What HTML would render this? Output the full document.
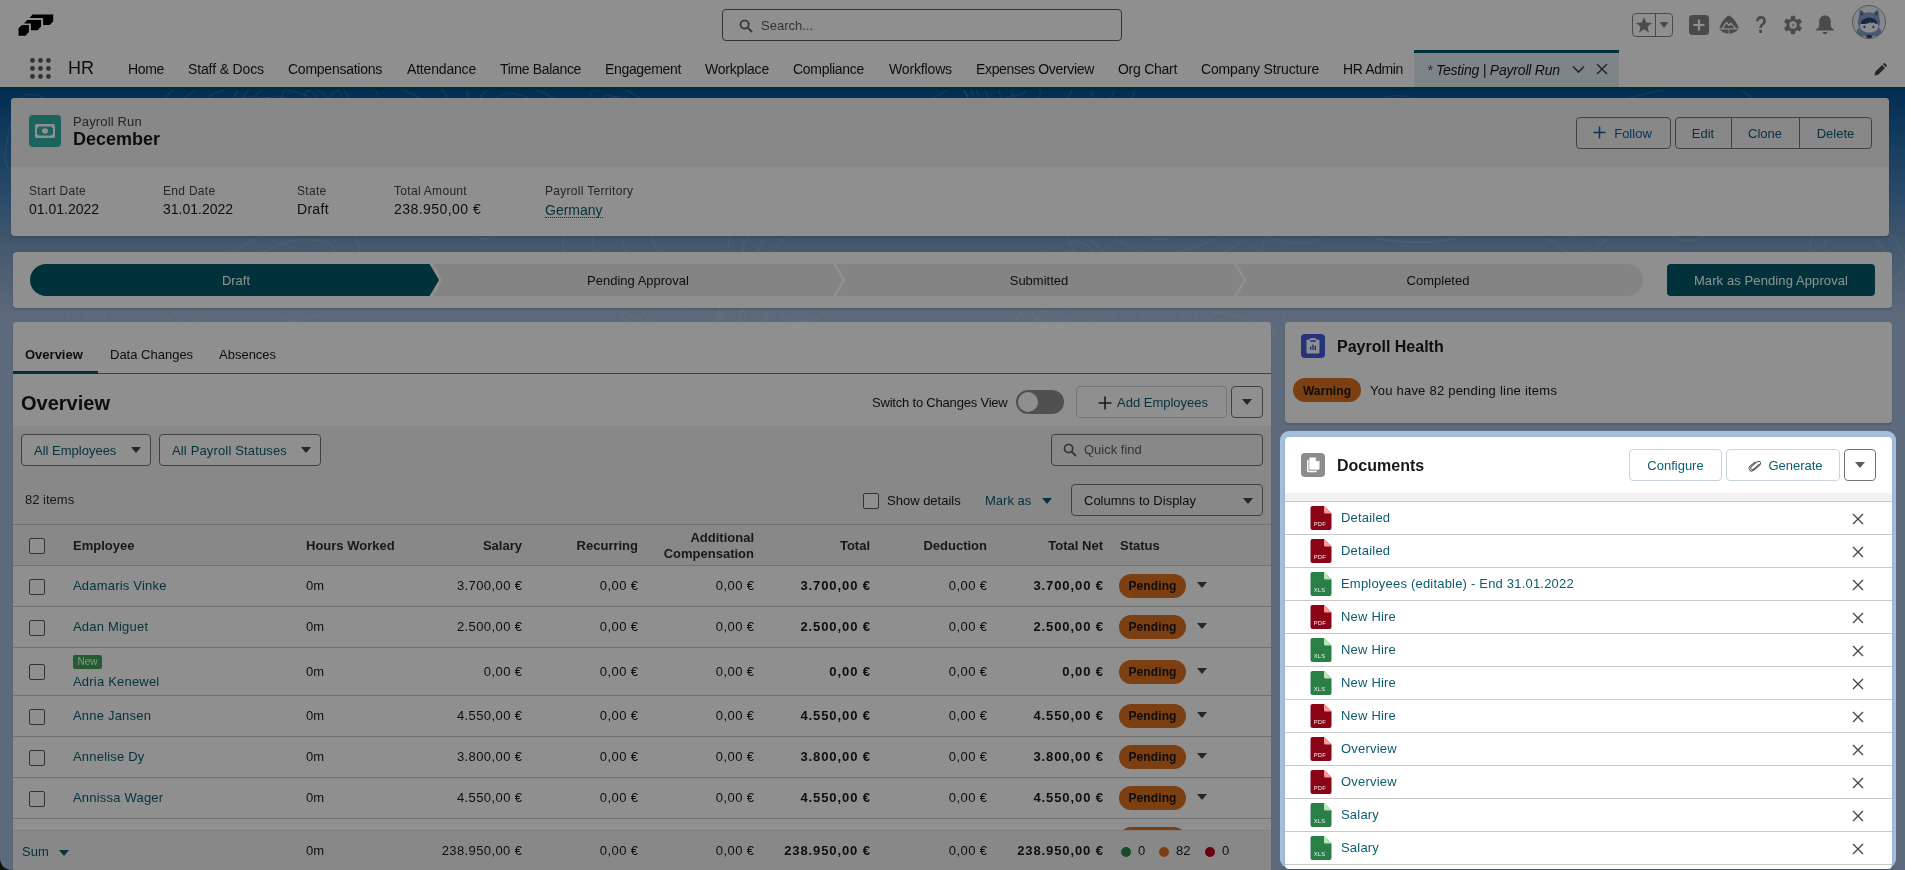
<!DOCTYPE html>
<html lang="en">
<head>
<meta charset="utf-8">
<title>December | Payroll Run</title>
<style>
*{box-sizing:border-box;margin:0;padding:0}
html,body{width:1905px;height:870px;overflow:hidden}
body{font-family:"Liberation Sans",sans-serif;font-size:13px;color:#181818;background:#a5bedc;position:relative}
.abs{position:absolute}
.t{white-space:nowrap;color:#181818}
a{color:#0b5c6f;text-decoration:none}
svg{display:block}
/* ---------- header ---------- */
#hdr{position:absolute;left:0;top:0;width:1905px;height:90px;background:#fff;border-bottom:3px solid #015366}
#search{position:absolute;left:722px;top:9px;width:400px;height:32px;border:1px solid #5c5c5c;border-radius:4px;background:#fff}
#search span{position:absolute;left:38px;top:8px;font-size:13px;color:#5c5c5c}
.nav{position:absolute;top:61px;font-size:14px;line-height:16px;color:#181818;white-space:nowrap}
#tab{position:absolute;left:1414px;top:50px;width:205px;height:37px;background:#e3eef0;border-top:3px solid #015366}
/* ---------- background band ---------- */
#band{position:absolute;left:0;top:90px;width:1905px;height:250px;background:linear-gradient(to bottom,rgb(5,80,146) 0,rgb(36,107,170) 20%,rgb(80,134,188) 44%,rgb(120,157,196) 61.600%,rgb(166,188,218) 90%,rgb(165,190,220) 100%)}
/* ---------- cards ---------- */
.card{position:absolute;background:#fff;border-radius:4px;box-shadow:0 2px 2px rgba(0,0,0,.12)}
.lbl{position:absolute;font-size:12px;color:#444;white-space:nowrap;letter-spacing:.3px}
.val{position:absolute;font-size:14px;color:#181818;white-space:nowrap}
.btn{position:absolute;height:32px;border:1px solid #747474;background:#fff;border-radius:4px;font-size:13px;color:#0b5c6f;text-align:center;line-height:30px;white-space:nowrap}
#hdr,.card,#docs{will-change:transform}
/* ---------- overlay ---------- */
#dim{position:absolute;left:0;top:0;width:1905px;height:870px;background:rgba(0,0,0,.44);z-index:50}
#hl{position:absolute;left:1280px;top:431px;width:616px;height:437px;background:#a5bedc;border-radius:9px;z-index:60}
#docs{position:absolute;left:1285px;top:437px;width:607px;height:432px;background:#fff;border-radius:4px;z-index:70;overflow:hidden;box-shadow:0 1px 2px rgba(0,0,0,.22)}
</style>
</head>
<body>
<!--BG-->
<div id="band"><svg class="abs" style="left:0;top:0" width="1905" height="250" viewBox="0 0 1905 250"><g fill="none" stroke="#fff" stroke-opacity=".13" stroke-width="1.200"><path d="M648 41C646 46 634 51 627 52C620 53 614 48 607 46C599 43 586 42 584 38C583 34 592 27 596 21C600 16 601 7 606 5C612 4 622 10 627 13C633 16 636 18 640 23C643 28 651 36 648 41z"/><path d="M666 48C662 55 643 63 632 64C622 65 612 58 601 55C590 51 569 49 566 43C564 36 579 25 585 17C590 9 592 -5 600 -8C609 -10 624 -1 633 4C642 8 647 12 653 20C658 27 669 40 666 48z"/><path d="M812 221C808 222 798 223 794 221C790 219 789 212 789 208C789 204 792 201 794 197C797 193 801 186 804 186C808 186 812 194 816 197C821 199 831 199 832 202C833 204 825 209 822 212C819 215 817 219 812 221z"/><path d="M814 229C807 232 792 233 786 229C780 226 778 215 778 209C778 203 782 198 786 193C790 187 796 175 802 175C808 175 813 188 820 192C828 196 844 196 845 200C847 204 835 211 829 216C824 221 821 227 814 229z"/><path d="M282 7C288 8 296 10 299 13C302 17 302 25 299 29C297 33 289 35 283 37C277 38 269 40 265 38C261 37 260 29 259 25C258 22 258 19 259 15C261 12 264 8 268 7C272 5 277 6 282 7z"/><path d="M287 -0C295 2 308 4 312 9C316 15 317 27 313 33C309 39 296 43 287 45C278 48 265 51 259 48C253 45 252 34 250 28C249 22 249 17 251 13C253 8 258 1 264 -1C270 -3 279 -2 287 -0z"/><path d="M291 -7C302 -5 319 -2 325 5C331 13 332 30 326 38C321 46 304 51 292 54C280 57 262 62 254 58C245 54 244 39 242 31C240 23 239 16 242 10C245 3 252 -6 260 -9C268 -11 280 -10 291 -7z"/><path d="M295 -15C309 -12 331 -8 339 1C346 11 347 32 340 43C333 53 312 59 296 63C281 67 259 73 248 68C237 63 235 43 233 33C231 23 230 15 234 7C238 -1 246 -13 256 -16C266 -20 281 -18 295 -15z"/><path d="M1276 92C1280 88 1285 87 1291 85C1297 84 1306 80 1311 82C1317 83 1323 91 1323 96C1324 100 1317 105 1314 109C1310 113 1308 119 1303 120C1298 122 1289 120 1283 118C1277 115 1267 111 1266 107C1265 103 1272 95 1276 92z"/><path d="M1264 87C1271 81 1279 79 1288 77C1297 74 1311 68 1320 71C1328 73 1338 86 1338 93C1339 100 1328 107 1323 113C1318 120 1314 129 1306 131C1298 133 1286 130 1276 127C1267 123 1252 117 1250 110C1248 104 1258 92 1264 87z"/><path d="M1253 82C1262 74 1273 72 1285 68C1298 64 1317 56 1328 60C1339 64 1352 80 1353 90C1354 100 1340 109 1333 118C1325 126 1320 139 1310 142C1299 145 1282 141 1269 136C1257 131 1236 123 1233 114C1230 105 1245 89 1253 82z"/><path d="M1242 76C1253 67 1267 64 1282 59C1298 55 1322 45 1336 49C1351 54 1367 75 1368 87C1369 99 1351 111 1342 122C1333 133 1326 148 1313 152C1300 156 1278 151 1262 145C1246 139 1220 128 1216 117C1213 105 1231 86 1242 76z"/><path d="M1420 86C1413 93 1401 105 1392 104C1383 104 1375 90 1367 84C1360 77 1346 72 1346 66C1346 61 1361 56 1368 50C1375 43 1378 30 1387 27C1397 25 1417 30 1425 36C1433 42 1436 55 1435 63C1435 72 1427 79 1420 86z"/><path d="M1437 98C1425 109 1407 127 1393 126C1380 126 1367 104 1355 94C1343 84 1322 76 1323 67C1323 58 1345 51 1356 41C1366 31 1372 10 1386 7C1401 3 1431 10 1444 19C1456 29 1462 49 1461 62C1459 76 1448 87 1437 98z"/><path d="M1637 56C1642 50 1652 48 1661 46C1670 44 1684 40 1692 44C1701 47 1713 57 1713 65C1714 72 1703 80 1697 87C1690 93 1683 101 1675 101C1668 102 1662 91 1654 87C1646 83 1631 83 1628 78C1625 72 1631 61 1637 56z"/><path d="M1620 47C1628 38 1643 34 1657 31C1672 28 1692 23 1706 28C1719 33 1737 50 1739 61C1740 72 1722 85 1713 95C1703 104 1691 118 1680 118C1669 118 1659 102 1647 96C1634 90 1611 89 1606 81C1602 73 1611 55 1620 47z"/><path d="M1602 38C1614 27 1634 21 1654 17C1673 13 1701 6 1719 13C1737 19 1762 42 1764 57C1765 72 1742 90 1729 103C1715 116 1699 134 1684 134C1669 135 1656 113 1639 105C1622 96 1590 95 1584 84C1578 73 1591 49 1602 38z"/><path d="M1585 29C1600 15 1626 8 1650 3C1675 -3 1710 -11 1733 -3C1756 6 1787 34 1789 53C1791 72 1761 95 1744 111C1728 127 1707 150 1688 151C1669 151 1652 124 1631 113C1611 103 1570 102 1563 88C1555 73 1571 43 1585 29z"/><path d="M1225 275C1215 273 1199 272 1196 266C1193 261 1205 251 1207 244C1210 237 1207 227 1212 224C1218 220 1232 224 1239 226C1247 228 1254 232 1257 236C1260 241 1259 246 1259 253C1259 260 1263 275 1258 278C1252 282 1235 277 1225 275z"/><path d="M1221 290C1205 287 1180 284 1176 276C1171 268 1189 253 1193 242C1198 230 1193 215 1201 210C1209 205 1231 210 1243 213C1254 217 1265 223 1270 230C1275 237 1273 244 1274 255C1274 266 1280 289 1272 295C1263 301 1237 293 1221 290z"/><path d="M1217 305C1195 301 1162 297 1155 286C1149 275 1174 254 1179 239C1185 224 1179 203 1190 196C1201 190 1231 196 1246 201C1262 205 1276 214 1283 223C1290 233 1288 243 1288 258C1289 272 1297 304 1285 311C1273 319 1238 309 1217 305z"/><path d="M259 44C264 47 271 50 272 54C273 58 271 65 266 69C262 74 254 80 247 81C240 81 230 77 224 73C218 68 212 60 213 55C214 50 225 46 230 42C235 39 241 35 246 35C251 35 255 41 259 44z"/><path d="M267 38C273 43 285 47 286 54C288 60 284 70 278 77C271 84 259 94 248 95C237 96 220 89 211 83C202 76 193 63 194 55C196 48 212 41 221 36C229 31 238 24 245 24C253 25 260 33 267 38z"/><path d="M274 32C283 39 298 44 301 53C303 62 297 76 289 85C280 95 263 108 248 109C233 110 211 102 199 93C187 84 174 66 176 56C178 45 200 36 212 29C223 22 235 13 245 14C255 14 265 26 274 32z"/><path d="M703 241C695 244 686 247 678 246C670 246 661 241 655 236C649 230 641 222 641 215C642 207 649 195 657 191C665 188 681 190 689 193C697 195 701 202 706 207C712 213 724 219 723 225C723 230 710 237 703 241z"/><path d="M714 252C702 258 687 262 675 261C662 260 649 252 639 244C630 236 618 223 618 212C619 200 630 181 642 176C654 170 680 174 692 178C705 182 710 192 719 200C728 209 746 219 745 228C745 236 725 247 714 252z"/><path d="M688 106C699 103 712 102 722 105C732 107 747 117 748 124C750 131 735 137 730 146C726 155 731 172 724 176C716 181 695 177 683 173C671 169 658 161 653 153C649 144 650 129 656 121C662 114 677 109 688 106z"/><path d="M679 89C696 85 716 82 732 87C748 91 771 105 773 116C775 127 752 138 745 151C739 165 747 191 735 198C722 205 690 200 672 193C654 187 632 174 625 161C618 147 621 125 630 113C639 101 662 94 679 89z"/><path d="M670 72C693 66 721 62 742 69C763 75 794 94 797 109C800 123 769 138 760 156C752 175 762 210 746 220C729 229 685 222 661 213C636 205 607 188 598 169C588 151 592 120 604 104C616 88 647 78 670 72z"/><path d="M661 55C690 48 726 43 752 51C779 58 818 83 822 101C826 120 786 138 775 161C764 185 778 229 757 241C736 253 680 244 649 233C618 223 582 201 570 178C558 155 562 116 578 95C593 75 632 63 661 55z"/><path d="M739 86C741 85 745 84 748 84C751 84 756 84 759 86C761 88 762 92 762 94C762 97 761 102 758 103C756 105 750 104 747 104C743 103 741 102 738 100C736 98 733 95 733 93C734 91 736 88 739 86z"/><path d="M734 82C738 80 744 78 749 78C754 78 761 79 765 82C768 85 769 90 769 95C769 99 768 106 765 108C761 111 752 110 746 109C741 108 737 106 734 103C730 101 726 96 726 93C726 89 730 85 734 82z"/><path d="M729 78C735 75 742 73 749 73C756 73 766 74 771 78C775 82 777 89 777 95C777 101 776 110 771 114C765 117 753 115 746 114C739 113 733 110 729 107C724 103 718 97 718 92C718 88 724 81 729 78z"/><path d="M725 74C731 70 741 67 749 67C758 67 771 69 777 74C783 78 785 88 785 95C785 103 783 115 777 119C770 123 754 121 746 120C737 118 730 115 724 110C718 106 710 98 710 92C711 86 718 78 725 74z"/><path d="M206 75C208 78 206 82 206 84C205 87 205 90 203 92C201 94 197 96 193 96C190 96 185 94 183 93C181 91 182 88 181 85C181 81 177 76 179 74C181 71 189 67 193 68C198 68 204 72 206 75z"/><path d="M212 70C216 74 213 80 212 84C212 89 211 93 208 96C205 99 199 102 193 102C188 102 180 100 177 97C174 94 176 90 175 85C174 80 168 72 171 68C174 63 186 58 193 58C200 59 209 65 212 70z"/><path d="M901 123C899 125 894 126 890 127C886 128 877 131 874 129C872 128 873 121 874 117C875 114 876 114 878 110C880 107 881 99 884 98C888 97 896 102 899 104C902 107 901 111 901 114C901 117 902 121 901 123z"/><path d="M908 127C905 131 898 132 891 134C884 135 871 140 867 137C863 134 866 123 867 118C868 113 870 112 873 107C875 102 877 89 882 88C888 86 900 94 905 98C909 102 908 109 909 113C909 118 911 124 908 127z"/><path d="M1073 -7C1074 -1 1068 9 1063 13C1057 17 1046 16 1038 17C1031 17 1022 17 1018 14C1013 11 1013 5 1011 -0C1009 -6 1002 -16 1006 -20C1009 -24 1022 -26 1030 -27C1039 -28 1050 -29 1057 -25C1064 -22 1072 -14 1073 -7z"/><path d="M1094 -9C1095 1 1087 16 1078 22C1069 28 1052 27 1040 27C1029 27 1016 28 1009 24C1002 19 1002 10 999 1C995 -8 985 -22 990 -29C994 -36 1015 -39 1028 -40C1041 -41 1058 -43 1069 -38C1080 -33 1092 -19 1094 -9z"/><path d="M1115 -12C1117 2 1105 23 1093 31C1081 39 1058 38 1042 38C1027 38 1009 39 999 33C990 27 990 14 986 2C981 -10 967 -29 974 -39C980 -48 1008 -51 1026 -53C1044 -55 1066 -57 1081 -50C1096 -43 1113 -25 1115 -12z"/><path d="M1136 -14C1138 3 1124 30 1109 40C1093 50 1064 48 1044 49C1024 49 1002 50 990 42C978 35 978 19 973 4C967 -11 949 -36 957 -48C966 -60 1001 -64 1023 -66C1046 -69 1075 -71 1093 -63C1112 -54 1133 -31 1136 -14z"/><path d="M676 44C679 51 672 64 664 71C657 78 644 84 633 84C622 85 605 81 599 75C593 69 597 58 597 50C597 43 593 34 598 29C602 24 617 21 625 21C632 22 636 29 645 33C653 36 673 38 676 44z"/><path d="M703 42C708 52 696 73 684 84C673 94 652 103 635 104C618 105 593 99 583 90C574 81 580 64 580 52C579 40 574 26 581 18C588 11 611 6 623 7C635 8 640 18 654 24C667 30 698 32 703 42z"/><path d="M42 41C47 39 56 45 62 47C69 49 78 50 81 54C84 59 84 67 81 72C79 77 70 84 64 84C58 85 49 80 45 77C40 74 37 71 36 68C35 64 35 61 36 57C37 52 38 42 42 41z"/><path d="M36 29C43 26 57 35 67 39C77 42 92 43 97 50C102 56 101 70 97 78C92 85 79 95 70 96C60 98 47 90 40 85C33 81 29 76 26 70C24 65 25 61 27 54C29 47 30 31 36 29z"/><path d="M31 17C40 13 59 25 72 30C86 35 106 37 112 45C119 54 118 73 112 83C106 94 89 107 76 108C63 110 45 99 35 93C25 87 20 80 17 73C14 66 15 60 18 50C20 41 21 20 31 17z"/><path d="M25 5C36 1 60 15 77 21C94 27 119 30 128 41C136 52 136 75 128 88C120 102 98 118 82 120C66 123 43 109 31 101C18 94 11 85 7 76C4 67 5 59 8 47C11 35 13 9 25 5z"/><path d="M408 24C413 30 409 40 407 47C405 54 403 62 397 66C390 71 375 76 368 74C362 72 361 60 356 54C350 48 339 45 338 39C337 32 342 21 349 16C357 12 371 11 381 13C391 14 404 19 408 24z"/><path d="M427 14C433 23 428 38 425 49C422 60 419 72 409 79C398 86 376 94 365 91C354 88 353 69 345 60C337 51 319 46 318 36C316 27 324 8 335 2C347 -5 369 -6 384 -4C400 -2 420 5 427 14z"/><path d="M445 4C454 16 447 37 443 51C439 66 434 82 420 91C407 101 376 112 362 108C347 103 345 78 334 66C324 53 300 47 298 34C295 21 306 -4 322 -13C337 -22 367 -24 388 -21C408 -18 436 -8 445 4z"/><path d="M463 -7C475 9 466 35 461 54C456 72 450 92 432 104C415 116 376 130 358 125C340 119 337 87 324 72C310 56 280 48 277 31C275 15 289 -16 308 -28C327 -39 365 -41 391 -38C417 -34 452 -22 463 -7z"/><path d="M1433 101C1438 101 1447 101 1450 104C1454 107 1458 116 1456 119C1454 123 1444 125 1439 127C1434 128 1430 129 1424 129C1419 128 1409 128 1406 125C1403 122 1403 113 1406 110C1408 106 1416 105 1421 104C1425 102 1428 101 1433 101z"/><path d="M1436 93C1444 93 1457 94 1462 99C1468 104 1473 116 1470 122C1467 128 1452 131 1444 134C1436 136 1430 137 1422 137C1413 136 1398 136 1393 131C1388 126 1389 113 1393 107C1397 102 1409 100 1416 98C1423 96 1428 93 1436 93z"/><path d="M1438 86C1449 86 1466 87 1474 93C1482 100 1489 117 1485 125C1481 133 1461 138 1450 141C1439 144 1431 145 1419 145C1408 144 1387 144 1380 137C1374 130 1375 112 1380 105C1385 98 1402 95 1412 92C1421 89 1428 85 1438 86z"/><path d="M1441 78C1454 78 1476 80 1486 88C1496 96 1505 118 1500 128C1495 138 1469 144 1455 148C1441 152 1431 153 1417 152C1402 152 1376 151 1367 143C1359 135 1361 112 1367 103C1374 93 1395 91 1407 86C1419 82 1428 78 1441 78z"/><path d="M253 7C262 7 281 7 288 13C295 19 299 36 294 44C290 52 272 59 261 61C251 63 239 59 229 56C219 53 206 49 203 43C200 37 209 27 213 21C218 16 224 13 231 10C237 8 243 6 253 7z"/><path d="M259 -6C274 -5 303 -6 314 4C324 13 330 40 323 52C316 65 289 76 272 79C255 82 237 76 222 71C207 66 186 60 182 51C178 42 190 25 197 17C204 8 214 3 224 -0C234 -4 244 -6 259 -6z"/><path d="M265 -18C285 -17 325 -18 339 -5C354 8 361 43 351 60C342 77 305 93 283 97C260 101 235 92 215 86C195 79 166 71 160 58C155 46 172 24 181 12C191 1 204 -6 218 -11C232 -16 244 -19 265 -18z"/><path d="M271 -30C296 -29 346 -31 365 -14C383 2 392 47 380 68C368 90 322 109 293 114C265 120 234 108 208 100C182 92 146 81 139 66C132 51 153 22 165 8C178 -7 194 -15 212 -21C229 -28 245 -32 271 -30z"/><path d="M1876 150C1880 155 1888 164 1886 170C1884 175 1872 184 1865 185C1857 187 1847 180 1841 176C1834 173 1829 171 1826 167C1824 163 1823 156 1825 152C1827 147 1833 144 1839 141C1845 139 1855 134 1861 136C1867 137 1872 144 1876 150z"/><path d="M1891 145C1897 153 1908 166 1905 175C1903 185 1885 198 1873 200C1862 202 1846 191 1836 186C1826 181 1818 178 1814 171C1810 165 1808 154 1812 148C1815 141 1824 136 1834 132C1843 127 1858 121 1868 123C1877 125 1885 136 1891 145z"/><path d="M509 92C511 95 513 99 512 102C512 105 509 110 505 112C501 115 493 119 489 118C484 117 482 110 479 107C476 103 469 98 470 95C471 91 479 88 484 86C488 85 494 83 498 84C503 85 506 89 509 92z"/><path d="M517 88C520 92 523 98 523 104C522 109 517 116 511 120C505 124 493 129 486 128C479 126 475 117 470 111C465 105 455 98 456 93C458 87 471 82 478 79C485 77 494 75 501 76C507 77 513 83 517 88z"/><path d="M525 84C530 90 534 98 533 105C531 113 526 121 517 127C509 132 492 140 483 138C474 136 468 123 462 115C455 107 441 97 443 90C445 83 462 76 472 73C482 69 494 66 503 68C512 70 520 78 525 84z"/><path d="M533 80C539 88 544 98 543 107C541 116 534 127 523 134C513 141 492 151 480 148C468 146 462 129 453 119C445 109 427 97 429 88C432 79 454 70 466 66C479 61 494 57 505 60C516 62 527 72 533 80z"/><path d="M1005 8C998 11 990 20 985 19C981 18 980 7 977 2C975 -4 970 -8 971 -13C973 -18 978 -26 984 -28C990 -30 1002 -29 1008 -26C1014 -24 1017 -18 1020 -13C1023 -8 1026 -1 1024 3C1021 6 1011 5 1005 8z"/><path d="M1009 15C999 19 986 34 978 33C971 31 970 14 967 5C963 -3 956 -9 957 -17C959 -25 967 -37 977 -41C986 -44 1004 -42 1013 -38C1023 -34 1028 -25 1032 -17C1036 -10 1043 2 1039 7C1035 12 1019 11 1009 15z"/><path d="M1044 190C1046 187 1048 185 1052 183C1056 181 1062 177 1066 178C1070 179 1074 185 1075 188C1077 192 1078 196 1076 199C1075 203 1071 208 1067 209C1062 211 1053 213 1049 211C1045 209 1043 203 1042 199C1041 196 1042 192 1044 190z"/><path d="M1036 187C1039 183 1043 180 1048 177C1054 174 1065 168 1071 169C1077 171 1082 180 1085 185C1087 191 1088 197 1086 202C1084 208 1079 215 1072 218C1065 221 1051 223 1044 221C1038 218 1034 208 1033 202C1031 197 1033 191 1036 187z"/><path d="M1028 185C1032 179 1037 175 1045 171C1053 167 1067 159 1075 161C1083 162 1091 174 1094 182C1098 189 1099 198 1096 205C1093 213 1086 222 1076 227C1067 231 1048 234 1040 230C1031 226 1026 213 1024 205C1022 198 1025 191 1028 185z"/><path d="M1020 182C1025 175 1032 170 1042 164C1051 159 1069 149 1080 152C1090 154 1099 169 1104 179C1108 188 1110 199 1106 209C1102 218 1093 230 1081 235C1069 240 1046 244 1035 239C1024 235 1017 218 1015 208C1012 199 1016 190 1020 182z"/><path d="M1157 100C1162 98 1173 98 1180 100C1186 102 1191 108 1195 113C1199 119 1206 128 1203 134C1200 139 1188 144 1179 146C1170 149 1159 151 1151 148C1143 146 1131 138 1130 132C1129 126 1139 119 1144 113C1148 108 1151 103 1157 100z"/><path d="M1151 89C1160 85 1177 84 1187 88C1196 91 1204 100 1210 109C1216 118 1227 132 1223 141C1219 149 1199 156 1186 160C1172 164 1155 167 1143 163C1130 159 1111 147 1109 138C1108 129 1124 117 1131 109C1138 101 1142 92 1151 89z"/><path d="M1145 77C1158 72 1180 71 1194 76C1207 80 1217 92 1225 104C1234 116 1248 136 1243 148C1237 159 1211 169 1193 174C1174 179 1151 183 1134 178C1117 173 1092 156 1089 144C1087 132 1109 116 1119 105C1128 94 1133 82 1145 77z"/><path d="M1139 66C1155 60 1184 58 1201 64C1217 70 1230 85 1241 100C1251 115 1269 140 1263 155C1256 169 1222 181 1199 187C1176 193 1147 199 1125 192C1104 186 1072 165 1069 150C1066 135 1094 114 1106 100C1118 86 1124 72 1139 66z"/><path d="M1085 252C1076 257 1070 265 1063 264C1056 264 1050 254 1045 249C1040 244 1033 238 1034 233C1034 228 1042 224 1048 219C1054 214 1060 203 1069 201C1078 200 1094 205 1102 211C1110 218 1119 231 1116 238C1114 245 1094 248 1085 252z"/><path d="M1095 262C1082 268 1072 281 1061 280C1051 280 1041 265 1033 257C1026 249 1015 240 1016 232C1017 225 1029 218 1038 210C1047 202 1057 185 1071 183C1085 181 1110 189 1122 198C1134 208 1149 229 1144 240C1140 250 1109 255 1095 262z"/><path d="M321 202C314 208 297 213 289 211C281 209 279 196 273 189C266 183 249 178 249 172C249 167 266 161 274 157C282 153 289 151 298 150C307 150 324 149 330 154C337 159 338 172 336 180C335 188 329 197 321 202z"/><path d="M336 217C324 225 299 234 286 230C274 227 271 207 261 197C250 187 224 179 224 170C225 162 251 152 263 146C276 141 286 136 300 136C315 135 340 134 350 142C360 149 362 169 360 182C357 194 349 209 336 217z"/><path d="M295 118C290 115 285 112 282 107C279 102 274 91 278 88C281 85 295 88 303 87C311 86 319 80 324 82C330 83 336 92 336 97C336 102 328 106 325 110C321 115 319 121 314 122C309 123 300 120 295 118z"/><path d="M288 126C280 122 272 117 268 109C263 102 256 85 262 80C267 75 289 80 301 79C313 77 325 68 333 70C342 73 351 87 352 94C352 102 340 108 334 115C328 121 325 131 317 133C309 135 296 130 288 126z"/><path d="M281 135C270 129 259 122 253 112C247 101 238 79 245 72C253 65 282 73 298 70C314 68 331 56 343 59C354 63 367 82 367 92C367 102 351 111 343 119C336 128 331 142 320 144C310 147 292 140 281 135z"/><path d="M1209 122C1211 125 1210 133 1206 135C1203 136 1194 133 1190 133C1185 132 1181 133 1179 132C1177 130 1178 127 1177 124C1176 121 1171 115 1172 113C1174 111 1183 112 1187 112C1191 112 1193 114 1197 116C1201 117 1208 118 1209 122z"/><path d="M1221 121C1223 126 1221 138 1216 141C1211 144 1197 139 1190 138C1183 137 1178 139 1174 137C1171 134 1172 129 1170 125C1169 120 1161 111 1164 107C1166 104 1180 105 1186 106C1193 106 1196 109 1201 111C1207 114 1218 116 1221 121z"/><path d="M803 250C792 250 773 257 767 253C760 249 762 234 764 225C765 217 768 205 775 202C782 198 798 204 806 206C814 208 817 209 824 213C832 217 848 223 848 229C849 235 837 245 829 248C822 252 813 249 803 250z"/><path d="M802 262C786 263 756 273 746 267C736 261 739 238 741 224C743 211 747 193 758 188C769 182 794 191 807 194C820 197 824 200 835 205C846 211 872 221 873 230C874 239 855 254 843 260C831 265 818 261 802 262z"/><path d="M801 274C779 276 739 290 726 281C712 273 716 241 719 223C721 205 727 180 742 174C757 167 790 178 808 182C825 186 832 190 846 198C861 206 895 219 897 231C899 243 872 264 856 271C840 279 823 273 801 274z"/><path d="M146 217C155 219 173 216 176 219C178 223 163 232 160 240C157 247 162 260 157 263C151 266 135 261 128 258C120 255 115 250 111 244C107 239 104 232 105 225C106 219 112 205 118 204C125 202 136 214 146 217z"/><path d="M150 207C164 211 193 206 196 211C200 217 177 232 173 243C168 254 176 274 167 279C159 284 134 276 122 271C110 266 102 258 96 250C91 242 85 231 86 221C88 210 97 190 108 187C118 185 135 203 150 207z"/><path d="M154 197C174 203 212 195 217 204C222 212 191 231 185 246C178 261 189 289 178 295C166 301 132 291 116 284C100 277 90 267 82 256C74 244 66 230 68 216C71 202 83 174 97 171C111 168 134 192 154 197z"/><path d="M512 41C506 41 499 40 495 37C491 35 490 29 489 25C489 20 489 15 492 11C495 8 502 4 508 3C514 3 521 5 528 8C534 11 546 17 546 22C547 26 536 34 530 37C524 40 518 41 512 41z"/><path d="M513 50C504 50 492 49 487 45C481 41 479 32 478 25C477 19 477 10 482 5C487 -1 498 -7 507 -8C516 -9 527 -5 537 -0C547 4 566 13 566 20C567 28 550 39 541 44C532 49 522 50 513 50z"/><path d="M974 38C973 41 967 43 963 46C959 50 954 59 949 59C944 59 935 53 932 49C929 45 932 39 933 35C934 30 933 25 937 21C941 17 951 10 956 11C961 12 964 23 967 27C970 32 974 35 974 38z"/><path d="M985 39C984 44 975 47 969 52C963 57 955 71 947 71C939 72 925 62 921 56C916 50 921 41 922 34C923 26 922 19 928 13C935 7 951 -5 959 -3C966 -2 971 15 975 23C980 30 986 34 985 39z"/><path d="M1574 84C1580 87 1586 91 1589 97C1591 102 1592 110 1589 115C1586 121 1577 131 1570 132C1563 133 1554 124 1547 120C1539 116 1527 115 1525 110C1522 104 1526 94 1531 89C1535 84 1545 79 1552 78C1559 77 1568 81 1574 84z"/><path d="M1582 74C1591 79 1601 85 1605 93C1609 101 1610 113 1605 123C1600 132 1587 147 1576 148C1565 149 1551 135 1539 130C1528 124 1509 121 1505 113C1501 105 1507 90 1514 82C1521 74 1536 66 1547 65C1558 63 1572 69 1582 74z"/><path d="M1589 64C1602 70 1615 79 1621 90C1626 101 1628 117 1621 130C1614 142 1596 163 1581 165C1566 166 1548 147 1532 139C1516 131 1491 128 1486 117C1480 107 1489 86 1498 75C1508 64 1528 53 1543 51C1558 50 1576 58 1589 64z"/><path d="M779 87C776 90 773 96 770 96C767 96 763 90 761 88C759 85 758 82 758 80C758 78 760 76 763 74C765 71 768 65 772 64C776 63 784 66 787 69C790 72 791 78 790 81C789 84 782 85 779 87z"/><path d="M784 91C779 95 775 104 770 104C765 104 758 96 755 92C752 88 750 84 751 80C751 76 754 74 758 70C762 66 766 56 772 55C778 54 791 58 795 63C800 67 803 76 801 81C799 86 789 87 784 91z"/></g></svg></div>
<!--HEADER-->
<div id="hdr">
  <svg class="abs" style="left:0;top:0" width="70" height="45" viewBox="0 0 70 45"><g fill="#000">
    <polygon points="32.5,14.4 53.2,14.4 53.2,21.3 49.8,25 43.1,25 43.1,17.9 29.5,17.9"/>
    <polygon points="27.2,19.9 41,19.9 41,26.6 37.6,30.3 30.9,30.3 30.9,23.4 24,23.4"/>
    <polygon points="22,25 28.9,25 28.9,31.9 25.4,35.7 18.5,35.7 18.5,28.2"/>
  </g></svg>
  <div id="search">
    <svg class="abs" style="left:16px;top:9px" width="14" height="14" viewBox="0 0 14 14"><circle cx="5.6" cy="5.6" r="4.1" fill="none" stroke="#5c5c5c" stroke-width="1.7"/><path d="M8.7 8.7L12.6 12.6" stroke="#5c5c5c" stroke-width="1.9" stroke-linecap="round"/></svg>
    <span>Search...</span>
  </div>
  <!-- right icons -->
  <div class="abs" style="left:1632px;top:13px;width:41px;height:24px;border:1px solid #858585;border-radius:4px"></div>
  <div class="abs" style="left:1655px;top:13px;width:1px;height:24px;background:#858585"></div>
  <svg class="abs" style="left:1635px;top:16px" width="18" height="18" viewBox="0 0 18 18"><polygon fill="#858585" points="9,1.2 11.2,6.6 17,7 12.5,10.8 14,16.5 9,13.3 4,16.5 5.5,10.8 1,7 6.8,6.6"/></svg>
  <svg class="abs" style="left:1659px;top:22px" width="10" height="6" viewBox="0 0 10 6"><polygon fill="#858585" points="0.5,0 9.5,0 5,6"/></svg>
  <svg class="abs" style="left:1689px;top:15px" width="20" height="20" viewBox="0 0 20 20"><rect width="20" height="20" rx="3.5" fill="#858585"/><path d="M10 4.5v11M4.5 10h11" stroke="#fff" stroke-width="2.2"/></svg>
  <svg class="abs" style="left:1719px;top:15px" width="20" height="20" viewBox="0 0 20 20"><path fill="#858585" d="M10 .700c1 0 1.700.500 2.500 1.200 3.200 2.800 5.800 6.500 6.900 10.300.100.400.100.800 0 1.100H.600c-.100-.300-.100-.700 0-1.100C1.700 8.400 4.300 4.700 7.500 1.900 8.300 1.200 9 .700 10 .700z"/><path fill="#858585" d="M.900 14.500h18.200c-.300.700-.900 1.300-1.700 1.800-2.200 1.500-4.700 2.500-7.400 2.500s-5.200-1-7.400-2.500c-.800-.500-1.400-1.100-1.700-1.800z"/><path d="M3.400 13.300l4.200-5.900 2.300 3.300 1.900-2.500 4.800 5.100" fill="none" stroke="#fff" stroke-width="1.200" stroke-linejoin="round"/><path d="M9.200 14.500l1.100 2-.9 2.300" fill="none" stroke="#fff" stroke-width="1"/></svg>
  <div class="abs" style="left:1751px;top:9px;width:20px;font-size:24px;line-height:32px;font-weight:bold;color:#858585;text-align:center;transform:scaleX(.82)">?</div>
  <svg class="abs" style="left:1783px;top:15px" width="20" height="20" viewBox="-10 -10 20 20"><g fill="#858585"><circle r="6.600"/><g id="gt"><rect x="-2.300" y="-9.300" width="4.600" height="5" rx="1.500"/><rect x="-2.300" y="4.300" width="4.600" height="5" rx="1.500"/></g><use href="#gt" transform="rotate(60)"/><use href="#gt" transform="rotate(120)"/></g><circle r="3.700" fill="#fff"/><path d="M.9-2.600l-2.300 3.100h1.500l-.8 2.300 2.500-3.200H.3z" fill="#858585"/></svg>
  <svg class="abs" style="left:1815px;top:14px" width="20" height="22" viewBox="0 0 20 22"><path fill="#858585" d="M10 1.500c3.400 0 5.800 2.600 5.800 6v4.200c0 1.600 1.300 2.700 2.700 3.300.5.200.5 1.500-.2 1.500H1.700c-.7 0-.7-1.300-.2-1.500 1.400-.6 2.700-1.700 2.700-3.300V7.500c0-3.400 2.400-6 5.800-6zM7.600 18h4.800c-.2 1.300-1.200 2.200-2.400 2.200S7.800 19.300 7.600 18z"/></svg>
  <svg class="abs" style="left:1852px;top:5px" width="34" height="34" viewBox="0 0 34 34"><defs><clipPath id="avc"><circle cx="17" cy="17" r="16.500"/></clipPath></defs><circle cx="17" cy="17" r="16.500" fill="#f1f3f9"/><g clip-path="url(#avc)"><path fill="#86a0cd" d="M7.200 6.600c.2-1.600 1.600-2 2.700-1l2.600 2.400c2.900-1 6.100-1 9 0l2.600-2.400c1.100-1 2.500-.6 2.700 1l.5 6.300c1.500 3.300 1.200 7-.8 9.600 2.600 1.800 3.900 4.800 3.700 8.500H3.800c-.2-3.700 1.100-6.700 3.700-8.500-2-2.600-2.300-6.300-.8-9.600z"/><path fill="#4e6b9c" d="M8.600 7.200c.1-.7.700-.8 1.200-.3l1.800 1.900-2.400 2.400zM25.400 7.200c-.1-.7-.7-.8-1.200-.3l-1.800 1.900 2.400 2.400z"/><ellipse cx="17.200" cy="21" rx="9.200" ry="6.600" fill="#f8f9fc"/><path fill="#2d4774" d="M8.600 19c.5-4 4.200-6.200 8.400-6.200 4.400 0 8.200 2.200 8.800 6.200-1.600.1-3.300-.5-4.500-1.700-.6.700-1.600 1.100-2.600 1.100.3-.5.500-1 .5-1.600-2.400 1.800-6.300 2.500-10.600 2.200z"/><ellipse cx="12.400" cy="22" rx="1" ry="1.300" fill="#2d4774"/><ellipse cx="21.400" cy="22" rx="1" ry="1.300" fill="#2d4774"/><ellipse cx="17.200" cy="31.400" rx="3" ry="1.600" fill="#2d4774"/></g><circle cx="17" cy="17" r="16.500" fill="none" stroke="#8f98aa" stroke-width="1"/></svg>
  <!-- nav -->
  <svg class="abs" style="left:30px;top:58px" width="21" height="21" viewBox="0 0 21 21"><g fill="#5c5c5c"><circle cx="2.500" cy="2.500" r="2.400"/><circle cx="10.500" cy="2.500" r="2.400"/><circle cx="18.500" cy="2.500" r="2.400"/><circle cx="2.500" cy="10.500" r="2.400"/><circle cx="10.500" cy="10.500" r="2.400"/><circle cx="18.500" cy="10.500" r="2.400"/><circle cx="2.500" cy="18.500" r="2.400"/><circle cx="10.500" cy="18.500" r="2.400"/><circle cx="18.500" cy="18.500" r="2.400"/></g></svg>
  <div class="abs" style="left:68px;top:57px;font-size:18px;line-height:22px;color:#181818">HR</div>
  <div class="nav" style="left:128px;letter-spacing:-0.34px">Home</div>
  <div class="nav" style="left:188px;letter-spacing:-0.13px">Staff &amp; Docs</div>
  <div class="nav" style="left:288px;letter-spacing:-0.25px">Compensations</div>
  <div class="nav" style="left:407px;letter-spacing:-0.18px">Attendance</div>
  <div class="nav" style="left:500px;letter-spacing:-0.34px">Time Balance</div>
  <div class="nav" style="left:605px;letter-spacing:-0.34px">Engagement</div>
  <div class="nav" style="left:705px;letter-spacing:-0.21px">Workplace</div>
  <div class="nav" style="left:793px;letter-spacing:-0.29px">Compliance</div>
  <div class="nav" style="left:889px;letter-spacing:-0.15px">Workflows</div>
  <div class="nav" style="left:976px;letter-spacing:-0.34px">Expenses Overview</div>
  <div class="nav" style="left:1118px;letter-spacing:-0.27px">Org Chart</div>
  <div class="nav" style="left:1201px;letter-spacing:-0.15px">Company Structure</div>
  <div class="nav" style="left:1343px;letter-spacing:-0.38px">HR Admin</div>
  <div id="tab"></div>
  <div class="nav" style="left:1427px;top:61.500px;font-style:italic;letter-spacing:-.21px"><span style="color:#0b5cab">*</span> Testing | Payroll Run</div>
  <svg class="abs" style="left:1572px;top:65px" width="13" height="9" viewBox="0 0 13 9"><path d="M1 1.500l5.500 5.500L12 1.500" fill="none" stroke="#444" stroke-width="1.600"/></svg>
  <svg class="abs" style="left:1596px;top:63px" width="12" height="12" viewBox="0 0 12 12"><path d="M1 1l10 10M11 1L1 11" fill="none" stroke="#444" stroke-width="1.500"/></svg>
  <svg class="abs" style="left:1874px;top:62px" width="14" height="14" viewBox="0 0 14 14"><path fill="#444" d="M10.300.800l2.900 2.900-1.400 1.400-2.900-2.900zM8.100 3L11 5.900l-6.800 6.800L.5 13.500l.8-3.700z"/></svg>
</div>
<!--RECORD-->
<div class="card" id="rec" style="left:11px;top:98px;width:1878px;height:138px;background:#fff">
  <div class="abs" style="left:0;top:0;width:1878px;height:69px;background:#f3f3f3;border-radius:4px 4px 0 0"></div>
  <div class="abs" style="left:18px;top:17px;width:32px;height:32px;border-radius:4px;background:#2fb3a6"></div>
  <svg class="abs" style="left:24px;top:26px" width="20" height="14" viewBox="0 0 20 14"><rect x="0" y="0" width="20" height="14" rx="1.500" fill="#fff"/><path d="M3.500 2.500h13a1.500 1.500 0 0 0 1.500 1.500v6a1.500 1.500 0 0 0-1.500 1.500h-13A1.500 1.500 0 0 0 2 10V4a1.500 1.500 0 0 0 1.500-1.500z" fill="#2fb3a6"/><ellipse cx="10" cy="7" rx="3" ry="2.800" fill="#fff"/></svg>
  <div class="abs" style="left:62px;top:16px;font-size:13px;line-height:16px;color:#444;letter-spacing:.15px">Payroll Run</div>
  <div class="abs" style="left:62px;top:30px;font-size:18px;line-height:22px;font-weight:bold;color:#181818">December</div>
  <div class="btn" style="left:1565px;top:19px;width:95px;background:transparent;color:#0b5cab;padding-left:19px;line-height:31px">Follow</div>
  <svg class="abs" style="left:1582px;top:28px" width="13" height="13" viewBox="0 0 13 13"><path d="M6.500 0.500v12M0.500 6.500h12" stroke="#0b5cab" stroke-width="1.500"/></svg>
  <div class="btn" style="left:1664px;top:19px;width:197px;background:transparent"></div>
  <div class="abs" style="left:1720px;top:19px;width:1px;height:32px;background:#747474"></div>
  <div class="abs" style="left:1788px;top:19px;width:1px;height:32px;background:#747474"></div>
  <div class="abs" style="left:1664px;top:28px;width:56px;text-align:center;color:#0b5c6f;font-size:13px;line-height:16px">Edit</div>
  <div class="abs" style="left:1720px;top:28px;width:68px;text-align:center;color:#0b5c6f;font-size:13px;line-height:16px">Clone</div>
  <div class="abs" style="left:1788px;top:28px;width:73px;text-align:center;color:#0b5c6f;font-size:13px;line-height:16px">Delete</div>
  <div class="lbl" style="left:18px;top:86px">Start Date</div><div class="val" style="left:18px;top:103px">01.01.2022</div>
  <div class="lbl" style="left:152px;top:86px">End Date</div><div class="val" style="left:152px;top:103px">31.01.2022</div>
  <div class="lbl" style="left:286px;top:86px">State</div><div class="val" style="left:286px;top:103px;letter-spacing:.3px">Draft</div>
  <div class="lbl" style="left:383px;top:86px">Total Amount</div><div class="val" style="left:383px;top:103px;letter-spacing:.45px">238.950,00 €</div>
  <div class="lbl" style="left:534px;top:86px">Payroll Territory</div><div class="val" style="left:534px;top:104px;color:#0b5c6f;border-bottom:1px dotted #0b5c6f;line-height:17px;height:16px">Germany</div>
</div>
<!--PATH-->
<div class="card" id="path" style="left:13px;top:252px;width:1879px;height:56px">
  <svg class="abs" style="left:0;top:0" width="1877" height="56" viewBox="13 252 1877 56">
    <path d="M420 264H1627a16 16 0 0 1 0 32H420z" fill="#ececec"/>
    <path d="M834 263l10 17-10 17" fill="none" stroke="#fff" stroke-width="2.500"/>
    <path d="M1235 263l10 17-10 17" fill="none" stroke="#fff" stroke-width="2.500"/>
    <path d="M431 263l10 17-10 17" fill="none" stroke="#fff" stroke-width="3"/>
    <path d="M46 264H429.500l9.500 16-9.500 16H46a16 16 0 0 1 0-32z" fill="#015a6c"/>
  </svg>
  <div class="abs" style="left:17px;top:21px;width:412px;text-align:center;font-size:13px;line-height:16px;color:#fff">Draft</div>
  <div class="abs" style="left:425px;top:21px;width:400px;text-align:center;font-size:13px;line-height:16px;color:#181818">Pending Approval</div>
  <div class="abs" style="left:826px;top:21px;width:400px;text-align:center;font-size:13px;line-height:16px;color:#181818">Submitted</div>
  <div class="abs" style="left:1225px;top:21px;width:400px;text-align:center;font-size:13px;line-height:16px;color:#181818">Completed</div>
  <div class="abs" style="left:1654px;top:12px;width:208px;height:32px;border-radius:4px;background:#015a6c;color:#fff;font-size:13px;line-height:33px;letter-spacing:.1px;text-align:center">Mark as Pending Approval</div>
</div>
<!--LEFT-->
<div class="card" id="left" style="left:13px;top:322px;width:1258px;height:560px;overflow:hidden;border-radius:4px 4px 0 0">
<div class="abs t" style="left:12px;top:24.5px;font-size:13px;line-height:16px;font-weight:bold;color:#181818">Overview</div>
<div class="abs t" style="left:97px;top:24.5px;font-size:13px;line-height:16px;">Data Changes</div>
<div class="abs t" style="left:206px;top:24.5px;font-size:13px;line-height:16px;">Absences</div>
<div class="abs" style="left:0px;top:51px;width:1258px;height:1px;background:#747474"></div>
<div class="abs" style="left:0px;top:49px;width:85px;height:3px;background:#015a6c"></div>
<div class="abs t" style="left:8px;top:69.0px;font-size:20px;line-height:24px;font-weight:bold">Overview</div>
<div class="abs t" style="left:859px;top:72.5px;font-size:13px;line-height:16px;letter-spacing:-.2px">Switch to Changes View</div>
<div class="abs" style="left:1003px;top:68px;width:48px;height:24px;border-radius:12px;background:#8f8f8f"></div>
<div class="abs" style="left:1005px;top:70px;width:20px;height:20px;border-radius:10px;background:#fff"></div>
<div class="abs" style="left:1063px;top:64px;width:151px;height:32px;border:1px solid #c9d3e0;border-radius:4px;background:#fff"></div>
<svg class="abs" style="left:1085px;top:74px" width="14" height="14" viewBox="0 0 14 14"><path d="M7 0.500v13M0.500 7h13" stroke="#2e2e2e" stroke-width="1.600"/></svg>
<div class="abs t" style="left:1104px;top:73.0px;font-size:13px;line-height:16px;color:#0b5c6f">Add Employees</div>
<div class="abs" style="left:1218px;top:64px;width:32px;height:32px;border:1px solid #747474;border-radius:4px;background:#fff"></div>
<svg class="abs" style="left:1229px;top:77px" width="10" height="6" viewBox="0 0 10 6"><polygon points="0,0 10,0 5.0,6" fill="#444"/></svg>
<div class="abs" style="left:0px;top:104px;width:1258px;height:140px;background:#f3f3f3"></div>
<div class="abs" style="left:8px;top:112px;width:130px;height:32px;border:1px solid #747474;border-radius:4px;background:#fff"></div>
<div class="abs t" style="left:21px;top:121.0px;font-size:13px;line-height:16px;color:#0b5c6f">All Employees</div>
<svg class="abs" style="left:118px;top:125px" width="10" height="6" viewBox="0 0 10 6"><polygon points="0,0 10,0 5.0,6" fill="#444"/></svg>
<div class="abs" style="left:146px;top:112px;width:162px;height:32px;border:1px solid #747474;border-radius:4px;background:#fff"></div>
<div class="abs t" style="left:159px;top:121.0px;font-size:13px;line-height:16px;letter-spacing:.15px;color:#0b5c6f">All Payroll Statuses</div>
<svg class="abs" style="left:288px;top:125px" width="10" height="6" viewBox="0 0 10 6"><polygon points="0,0 10,0 5.0,6" fill="#444"/></svg>
<div class="abs" style="left:1038px;top:112px;width:212px;height:32px;border:1px solid #747474;border-radius:4px;background:#f3f3f3"></div>
<svg class="abs" style="left:1050px;top:121px" width="14" height="14" viewBox="0 0 14 14"><circle cx="5.600" cy="5.600" r="4.100" fill="none" stroke="#5c5c5c" stroke-width="1.700"/><path d="M8.700 8.700L12.600 12.600" stroke="#5c5c5c" stroke-width="1.900" stroke-linecap="round"/></svg>
<div class="abs t" style="left:1071px;top:120.0px;font-size:13px;line-height:16px;color:#5c5c5c">Quick find</div>
<div class="abs t" style="left:12px;top:169.5px;font-size:13px;line-height:16px;color:#2e2e2e">82 items</div>
<div class="abs" style="left:850px;top:171px;width:16px;height:16px;border:1px solid #5c5c5c;border-radius:2px;background:#fff"></div>
<div class="abs t" style="left:874px;top:170.5px;font-size:13px;line-height:16px;">Show details</div>
<div class="abs t" style="left:972px;top:170.5px;font-size:13px;line-height:16px;color:#0b5c6f">Mark as</div>
<svg class="abs" style="left:1029px;top:176px" width="10" height="6" viewBox="0 0 10 6"><polygon points="0,0 10,0 5.0,6" fill="#0b5c6f"/></svg>
<div class="abs" style="left:1058px;top:162px;width:192px;height:32px;border:1px solid #747474;border-radius:4px;background:#f3f3f3"></div>
<div class="abs t" style="left:1071px;top:170.5px;font-size:13px;line-height:16px;">Columns to Display</div>
<svg class="abs" style="left:1230px;top:176px" width="10" height="6" viewBox="0 0 10 6"><polygon points="0,0 10,0 5.0,6" fill="#444"/></svg>
<div class="abs" style="left:0px;top:202px;width:1258px;height:1px;background:#c9c9c9"></div>
<div class="abs" style="left:0px;top:243px;width:1258px;height:1px;background:#c9c9c9"></div>
<div class="abs" style="left:16px;top:216px;width:16px;height:16px;border:1px solid #5c5c5c;border-radius:2px;background:#fff"></div>
<div class="abs t" style="left:60px;top:215.5px;font-size:13px;line-height:16px;font-weight:bold;color:#2e2e2e">Employee</div>
<div class="abs t" style="left:293px;top:215.5px;font-size:13px;line-height:16px;font-weight:bold;color:#2e2e2e">Hours Worked</div>
<div class="abs t" style="right:749px;top:215.5px;font-size:13px;line-height:16px;font-weight:bold;color:#2e2e2e">Salary</div>
<div class="abs t" style="right:633px;top:215.5px;font-size:13px;line-height:16px;font-weight:bold;color:#2e2e2e">Recurring</div>
<div class="abs t" style="right:517px;top:207.5px;font-size:13px;line-height:16px;font-weight:bold;color:#2e2e2e">Additional</div>
<div class="abs t" style="right:517px;top:223.5px;font-size:13px;line-height:16px;font-weight:bold;color:#2e2e2e">Compensation</div>
<div class="abs t" style="right:401px;top:215.5px;font-size:13px;line-height:16px;font-weight:bold;color:#2e2e2e">Total</div>
<div class="abs t" style="right:284px;top:215.5px;font-size:13px;line-height:16px;font-weight:bold;color:#2e2e2e">Deduction</div>
<div class="abs t" style="right:168px;top:215.5px;font-size:13px;line-height:16px;font-weight:bold;color:#2e2e2e">Total Net</div>
<div class="abs t" style="left:1107px;top:215.5px;font-size:13px;line-height:16px;font-weight:bold;color:#2e2e2e">Status</div>
<div class="abs" style="left:0px;top:284px;width:1258px;height:1px;background:#c9c9c9"></div>
<div class="abs" style="left:16px;top:256.5px;width:16px;height:16px;border:1px solid #5c5c5c;border-radius:2px;background:#fff"></div>
<div class="abs t" style="left:60px;top:255.5px;font-size:13px;line-height:16px;color:#0b5c6f;letter-spacing:.2px">Adamaris Vinke</div>
<div class="abs t" style="left:293px;top:255.5px;font-size:13px;line-height:16px;">0m</div>
<div class="abs t" style="right:748.6px;top:255.5px;font-size:13px;line-height:16px;;letter-spacing:0.4px">3.700,00 €</div>
<div class="abs t" style="right:632.6px;top:255.5px;font-size:13px;line-height:16px;;letter-spacing:0.4px">0,00 €</div>
<div class="abs t" style="right:516.6px;top:255.5px;font-size:13px;line-height:16px;;letter-spacing:0.4px">0,00 €</div>
<div class="abs t" style="right:400.1px;top:255.5px;font-size:13px;line-height:16px;font-weight:bold;letter-spacing:0.9px">3.700,00 €</div>
<div class="abs t" style="right:283.6px;top:255.5px;font-size:13px;line-height:16px;;letter-spacing:0.4px">0,00 €</div>
<div class="abs t" style="right:167.1px;top:255.5px;font-size:13px;line-height:16px;font-weight:bold;letter-spacing:0.9px">3.700,00 €</div>
<div class="abs" style="left:1106px;top:252px;width:67px;height:24px;border-radius:12px;background:#dc7020;color:#181818;font-size:12px;line-height:25px;font-weight:bold;text-align:center;letter-spacing:.1px">Pending</div>
<svg class="abs" style="left:1184px;top:260px" width="10" height="6" viewBox="0 0 10 6"><polygon points="0,0 10,0 5.0,6" fill="#444"/></svg>
<div class="abs" style="left:0px;top:325px;width:1258px;height:1px;background:#c9c9c9"></div>
<div class="abs" style="left:16px;top:297.5px;width:16px;height:16px;border:1px solid #5c5c5c;border-radius:2px;background:#fff"></div>
<div class="abs t" style="left:60px;top:296.5px;font-size:13px;line-height:16px;color:#0b5c6f;letter-spacing:.2px">Adan Miguet</div>
<div class="abs t" style="left:293px;top:296.5px;font-size:13px;line-height:16px;">0m</div>
<div class="abs t" style="right:748.6px;top:296.5px;font-size:13px;line-height:16px;;letter-spacing:0.4px">2.500,00 €</div>
<div class="abs t" style="right:632.6px;top:296.5px;font-size:13px;line-height:16px;;letter-spacing:0.4px">0,00 €</div>
<div class="abs t" style="right:516.6px;top:296.5px;font-size:13px;line-height:16px;;letter-spacing:0.4px">0,00 €</div>
<div class="abs t" style="right:400.1px;top:296.5px;font-size:13px;line-height:16px;font-weight:bold;letter-spacing:0.9px">2.500,00 €</div>
<div class="abs t" style="right:283.6px;top:296.5px;font-size:13px;line-height:16px;;letter-spacing:0.4px">0,00 €</div>
<div class="abs t" style="right:167.1px;top:296.5px;font-size:13px;line-height:16px;font-weight:bold;letter-spacing:0.9px">2.500,00 €</div>
<div class="abs" style="left:1106px;top:293px;width:67px;height:24px;border-radius:12px;background:#dc7020;color:#181818;font-size:12px;line-height:25px;font-weight:bold;text-align:center;letter-spacing:.1px">Pending</div>
<svg class="abs" style="left:1184px;top:301px" width="10" height="6" viewBox="0 0 10 6"><polygon points="0,0 10,0 5.0,6" fill="#444"/></svg>
<div class="abs" style="left:0px;top:373px;width:1258px;height:1px;background:#c9c9c9"></div>
<div class="abs" style="left:16px;top:342px;width:16px;height:16px;border:1px solid #5c5c5c;border-radius:2px;background:#fff"></div>
<div class="abs" style="left:60px;top:333px;width:29px;height:14px;background:#3ba755;border-radius:2px;color:#fff;font-size:10px;line-height:14px;text-align:center">New</div>
<div class="abs t" style="left:60px;top:351.5px;font-size:13px;line-height:16px;color:#0b5c6f;letter-spacing:.2px">Adria Kenewel</div>
<div class="abs t" style="left:293px;top:342.0px;font-size:13px;line-height:16px;">0m</div>
<div class="abs t" style="right:748.6px;top:342.0px;font-size:13px;line-height:16px;;letter-spacing:0.4px">0,00 €</div>
<div class="abs t" style="right:632.6px;top:342.0px;font-size:13px;line-height:16px;;letter-spacing:0.4px">0,00 €</div>
<div class="abs t" style="right:516.6px;top:342.0px;font-size:13px;line-height:16px;;letter-spacing:0.4px">0,00 €</div>
<div class="abs t" style="right:400.1px;top:342.0px;font-size:13px;line-height:16px;font-weight:bold;letter-spacing:0.9px">0,00 €</div>
<div class="abs t" style="right:283.6px;top:342.0px;font-size:13px;line-height:16px;;letter-spacing:0.4px">0,00 €</div>
<div class="abs t" style="right:167.1px;top:342.0px;font-size:13px;line-height:16px;font-weight:bold;letter-spacing:0.9px">0,00 €</div>
<div class="abs" style="left:1106px;top:338px;width:67px;height:24px;border-radius:12px;background:#dc7020;color:#181818;font-size:12px;line-height:25px;font-weight:bold;text-align:center;letter-spacing:.1px">Pending</div>
<svg class="abs" style="left:1184px;top:346px" width="10" height="6" viewBox="0 0 10 6"><polygon points="0,0 10,0 5.0,6" fill="#444"/></svg>
<div class="abs" style="left:0px;top:414px;width:1258px;height:1px;background:#c9c9c9"></div>
<div class="abs" style="left:16px;top:386.5px;width:16px;height:16px;border:1px solid #5c5c5c;border-radius:2px;background:#fff"></div>
<div class="abs t" style="left:60px;top:385.5px;font-size:13px;line-height:16px;color:#0b5c6f;letter-spacing:.2px">Anne Jansen</div>
<div class="abs t" style="left:293px;top:385.5px;font-size:13px;line-height:16px;">0m</div>
<div class="abs t" style="right:748.6px;top:385.5px;font-size:13px;line-height:16px;;letter-spacing:0.4px">4.550,00 €</div>
<div class="abs t" style="right:632.6px;top:385.5px;font-size:13px;line-height:16px;;letter-spacing:0.4px">0,00 €</div>
<div class="abs t" style="right:516.6px;top:385.5px;font-size:13px;line-height:16px;;letter-spacing:0.4px">0,00 €</div>
<div class="abs t" style="right:400.1px;top:385.5px;font-size:13px;line-height:16px;font-weight:bold;letter-spacing:0.9px">4.550,00 €</div>
<div class="abs t" style="right:283.6px;top:385.5px;font-size:13px;line-height:16px;;letter-spacing:0.4px">0,00 €</div>
<div class="abs t" style="right:167.1px;top:385.5px;font-size:13px;line-height:16px;font-weight:bold;letter-spacing:0.9px">4.550,00 €</div>
<div class="abs" style="left:1106px;top:382px;width:67px;height:24px;border-radius:12px;background:#dc7020;color:#181818;font-size:12px;line-height:25px;font-weight:bold;text-align:center;letter-spacing:.1px">Pending</div>
<svg class="abs" style="left:1184px;top:390px" width="10" height="6" viewBox="0 0 10 6"><polygon points="0,0 10,0 5.0,6" fill="#444"/></svg>
<div class="abs" style="left:0px;top:455px;width:1258px;height:1px;background:#c9c9c9"></div>
<div class="abs" style="left:16px;top:427.5px;width:16px;height:16px;border:1px solid #5c5c5c;border-radius:2px;background:#fff"></div>
<div class="abs t" style="left:60px;top:426.5px;font-size:13px;line-height:16px;color:#0b5c6f;letter-spacing:.2px">Annelise Dy</div>
<div class="abs t" style="left:293px;top:426.5px;font-size:13px;line-height:16px;">0m</div>
<div class="abs t" style="right:748.6px;top:426.5px;font-size:13px;line-height:16px;;letter-spacing:0.4px">3.800,00 €</div>
<div class="abs t" style="right:632.6px;top:426.5px;font-size:13px;line-height:16px;;letter-spacing:0.4px">0,00 €</div>
<div class="abs t" style="right:516.6px;top:426.5px;font-size:13px;line-height:16px;;letter-spacing:0.4px">0,00 €</div>
<div class="abs t" style="right:400.1px;top:426.5px;font-size:13px;line-height:16px;font-weight:bold;letter-spacing:0.9px">3.800,00 €</div>
<div class="abs t" style="right:283.6px;top:426.5px;font-size:13px;line-height:16px;;letter-spacing:0.4px">0,00 €</div>
<div class="abs t" style="right:167.1px;top:426.5px;font-size:13px;line-height:16px;font-weight:bold;letter-spacing:0.9px">3.800,00 €</div>
<div class="abs" style="left:1106px;top:423px;width:67px;height:24px;border-radius:12px;background:#dc7020;color:#181818;font-size:12px;line-height:25px;font-weight:bold;text-align:center;letter-spacing:.1px">Pending</div>
<svg class="abs" style="left:1184px;top:431px" width="10" height="6" viewBox="0 0 10 6"><polygon points="0,0 10,0 5.0,6" fill="#444"/></svg>
<div class="abs" style="left:0px;top:496px;width:1258px;height:1px;background:#c9c9c9"></div>
<div class="abs" style="left:16px;top:468.5px;width:16px;height:16px;border:1px solid #5c5c5c;border-radius:2px;background:#fff"></div>
<div class="abs t" style="left:60px;top:467.5px;font-size:13px;line-height:16px;color:#0b5c6f;letter-spacing:.2px">Annissa Wager</div>
<div class="abs t" style="left:293px;top:467.5px;font-size:13px;line-height:16px;">0m</div>
<div class="abs t" style="right:748.6px;top:467.5px;font-size:13px;line-height:16px;;letter-spacing:0.4px">4.550,00 €</div>
<div class="abs t" style="right:632.6px;top:467.5px;font-size:13px;line-height:16px;;letter-spacing:0.4px">0,00 €</div>
<div class="abs t" style="right:516.6px;top:467.5px;font-size:13px;line-height:16px;;letter-spacing:0.4px">0,00 €</div>
<div class="abs t" style="right:400.1px;top:467.5px;font-size:13px;line-height:16px;font-weight:bold;letter-spacing:0.9px">4.550,00 €</div>
<div class="abs t" style="right:283.6px;top:467.5px;font-size:13px;line-height:16px;;letter-spacing:0.4px">0,00 €</div>
<div class="abs t" style="right:167.1px;top:467.5px;font-size:13px;line-height:16px;font-weight:bold;letter-spacing:0.9px">4.550,00 €</div>
<div class="abs" style="left:1106px;top:464px;width:67px;height:24px;border-radius:12px;background:#dc7020;color:#181818;font-size:12px;line-height:25px;font-weight:bold;text-align:center;letter-spacing:.1px">Pending</div>
<svg class="abs" style="left:1184px;top:472px" width="10" height="6" viewBox="0 0 10 6"><polygon points="0,0 10,0 5.0,6" fill="#444"/></svg>
<div class="abs" style="left:0px;top:537px;width:1258px;height:1px;background:#c9c9c9"></div>
<div class="abs" style="left:16px;top:509.5px;width:16px;height:16px;border:1px solid #5c5c5c;border-radius:2px;background:#fff"></div>
<div class="abs t" style="left:60px;top:508.5px;font-size:13px;line-height:16px;color:#0b5c6f;letter-spacing:.2px">Antje Kolb</div>
<div class="abs t" style="left:293px;top:508.5px;font-size:13px;line-height:16px;">0m</div>
<div class="abs t" style="right:748.6px;top:508.5px;font-size:13px;line-height:16px;;letter-spacing:0.4px">3.200,00 €</div>
<div class="abs t" style="right:632.6px;top:508.5px;font-size:13px;line-height:16px;;letter-spacing:0.4px">0,00 €</div>
<div class="abs t" style="right:516.6px;top:508.5px;font-size:13px;line-height:16px;;letter-spacing:0.4px">0,00 €</div>
<div class="abs t" style="right:400.1px;top:508.5px;font-size:13px;line-height:16px;font-weight:bold;letter-spacing:0.9px">3.200,00 €</div>
<div class="abs t" style="right:283.6px;top:508.5px;font-size:13px;line-height:16px;;letter-spacing:0.4px">0,00 €</div>
<div class="abs t" style="right:167.1px;top:508.5px;font-size:13px;line-height:16px;font-weight:bold;letter-spacing:0.9px">3.200,00 €</div>
<div class="abs" style="left:1106px;top:505px;width:67px;height:24px;border-radius:12px;background:#dc7020;color:#181818;font-size:12px;line-height:25px;font-weight:bold;text-align:center;letter-spacing:.1px">Pending</div>
<svg class="abs" style="left:1184px;top:513px" width="10" height="6" viewBox="0 0 10 6"><polygon points="0,0 10,0 5.0,6" fill="#444"/></svg>
<div class="abs" style="left:0px;top:508px;width:1258px;height:60px;background:#f3f3f3;border-top:1px solid #e5e5e5"></div>
<div class="abs t" style="left:9px;top:521.5px;font-size:13px;line-height:16px;color:#0b5c6f">Sum</div>
<svg class="abs" style="left:46px;top:528px" width="10" height="6" viewBox="0 0 10 6"><polygon points="0,0 10,0 5.0,6" fill="#0b5c6f"/></svg>
<div class="abs t" style="left:293px;top:520.5px;font-size:13px;line-height:16px;">0m</div>
<div class="abs t" style="right:748.6px;top:520.5px;font-size:13px;line-height:16px;;letter-spacing:0.4px">238.950,00 €</div>
<div class="abs t" style="right:632.6px;top:520.5px;font-size:13px;line-height:16px;;letter-spacing:0.4px">0,00 €</div>
<div class="abs t" style="right:516.6px;top:520.5px;font-size:13px;line-height:16px;;letter-spacing:0.4px">0,00 €</div>
<div class="abs t" style="right:400.1px;top:520.5px;font-size:13px;line-height:16px;font-weight:bold;letter-spacing:0.9px">238.950,00 €</div>
<div class="abs t" style="right:283.6px;top:520.5px;font-size:13px;line-height:16px;;letter-spacing:0.4px">0,00 €</div>
<div class="abs t" style="right:167.1px;top:520.5px;font-size:13px;line-height:16px;font-weight:bold;letter-spacing:0.9px">238.950,00 €</div>
<div class="abs" style="left:1108px;top:525px;width:10px;height:10px;border-radius:5px;background:#2e844a"></div>
<div class="abs t" style="left:1125px;top:520.5px;font-size:13px;line-height:16px;">0</div>
<div class="abs" style="left:1146px;top:525px;width:10px;height:10px;border-radius:5px;background:#dc7020"></div>
<div class="abs t" style="left:1163px;top:520.5px;font-size:13px;line-height:16px;">82</div>
<div class="abs" style="left:1192px;top:525px;width:10px;height:10px;border-radius:5px;background:#ba0517"></div>
<div class="abs t" style="left:1209px;top:520.5px;font-size:13px;line-height:16px;">0</div>
</div>
<!--HEALTH-->
<div class="card" id="health" style="left:1285px;top:322px;width:607px;height:101px">
  <div class="abs" style="left:16px;top:12px;width:24px;height:24px;border-radius:4px;background:#4759de"></div>
  <svg class="abs" style="left:20px;top:15px" width="16" height="18" viewBox="0 0 16 18"><path fill="#fff" d="M5 2.500C5 1.700 5.700 1 6.500 1h3c.800 0 1.500.700 1.500 1.500h2.200c.700 0 1.300.600 1.300 1.300v11.400c0 .700-.600 1.300-1.300 1.300H2.800c-.700 0-1.300-.600-1.300-1.300V3.800c0-.700.600-1.300 1.300-1.300z"/><path d="M5.300 3.200h5.400v1.600H5.300z" fill="#4759de"/><path d="M5 9.500h1.400V13H5zM7.300 7.500h1.400V13H7.300zM9.600 8.800H11V13H9.600z" fill="#4759de"/></svg>
  <div class="abs" style="left:52px;top:15px;font-size:16px;line-height:20px;font-weight:bold;color:#181818">Payroll Health</div>
  <div class="abs" style="left:8px;top:56px;width:68px;height:24px;border-radius:12px;background:#dc7020;color:#181818;font-size:12px;line-height:26px;font-weight:bold;text-align:center;letter-spacing:.1px">Warning</div>
  <div class="abs" style="left:85px;top:61px;font-size:13px;line-height:16px;color:#181818;letter-spacing:.23px">You have 82 pending line items</div>
</div>
<div id="dim"></div>
<div id="hl"></div>
<svg id="crn" class="abs" style="left:0;top:858px;z-index:90" width="12" height="12" viewBox="0 0 12 12"><path d="M0 0C0 7 5 12 12 12H0z" fill="#0c120f"/></svg>
<!--DOCS-->
<div id="docs">
<div class="abs" style="left:16px;top:16px;width:24px;height:24px;border-radius:4px;background:#8c8c8c"></div>
<svg class="abs" style="left:20px;top:19px" width="16" height="18" viewBox="0 0 16 18"><path d="M5.500 1.500h5.300l3.700 3.700v7.300c0 .700-.500 1.200-1.200 1.200H5.500c-.700 0-1.200-.500-1.200-1.200V2.700c0-.700.500-1.200 1.200-1.200z" fill="#fff"/><path d="M10.800 1.500v2.600c0 .600.500 1.100 1.100 1.100h2.600z" fill="#8c8c8c"/><path d="M2.800 4.500v10c0 .600.500 1.100 1.100 1.100h7.300" fill="none" stroke="#fff" stroke-width="1.500" stroke-linecap="round"/></svg>
<div class="abs" style="left:52px;top:19px;font-size:16px;line-height:20px;font-weight:bold;color:#181818">Documents</div>
<div class="btn" style="left:344px;top:12px;width:93px;border-color:#c9d3e0;line-height:32px">Configure</div>
<div class="btn" style="left:441px;top:12px;width:114px;border-color:#c9d3e0;padding-left:25px;line-height:32px">Generate</div>
<svg class="abs" style="left:463px;top:22px" width="14" height="14" viewBox="0 0 14 14"><path d="M11.200 4.200L6 10.200c-.800.900-2 .900-2.700.200-.700-.700-.700-1.800 0-2.700L8.600 1.800c1-1.100 2.400-1.100 3.300-.300.900.800.900 2.200 0 3.300L6.400 11.200c-1.400 1.500-3.300 1.600-4.500.500-1.200-1.100-1.200-3 .100-4.500l4.300-4.900" transform="translate(0.500 1) scale(.92) rotate(8 7 7)" fill="none" stroke="#5c5c5c" stroke-width="1.100" stroke-linecap="round"/></svg>
<div class="btn" style="left:559px;top:12px;width:32px"></div>
<svg class="abs" style="left:570px;top:25px" width="10" height="6" viewBox="0 0 10 6"><polygon points="0,0 10,0 5,6" fill="#5c5c5c"/></svg>
<div class="abs" style="left:0;top:56px;width:607px;height:8px;background:#f3f3f3"></div>
<div class="abs" style="left:0;top:64px;width:607px;height:1px;background:#c9c9c9"></div>
<svg class="abs" style="left:25px;top:69px" width="22" height="24" viewBox="0 0 22 24"><path d="M2.500 0H14l7.500 7.500V22a2 2 0 0 1-2 2h-17a2 2 0 0 1-2-2V2a2 2 0 0 1 2-2z" fill="#8a0418"/><path d="M14 0l7.500 7.500H15.500A1.500 1.500 0 0 1 14 6z" fill="#fe9a8f"/><text x="3.800" y="20.300" font-family="Liberation Sans, sans-serif" font-size="5.800" fill="#fff" fill-opacity=".92" letter-spacing="0.200">PDF</text></svg>
<div class="abs t" style="left:56px;top:73px;font-size:13px;line-height:16px;color:#0b5c6f;letter-spacing:.2px">Detailed</div>
<svg class="abs" style="left:567px;top:76px" width="12" height="12" viewBox="0 0 12 12"><path d="M1 1l10 10M11 1L1 11" fill="none" stroke="#444" stroke-width="1.250"/></svg>
<div class="abs" style="left:0;top:97px;width:607px;height:1px;background:#c9c9c9"></div>
<svg class="abs" style="left:25px;top:102px" width="22" height="24" viewBox="0 0 22 24"><path d="M2.500 0H14l7.500 7.500V22a2 2 0 0 1-2 2h-17a2 2 0 0 1-2-2V2a2 2 0 0 1 2-2z" fill="#8a0418"/><path d="M14 0l7.500 7.500H15.500A1.500 1.500 0 0 1 14 6z" fill="#fe9a8f"/><text x="3.800" y="20.300" font-family="Liberation Sans, sans-serif" font-size="5.800" fill="#fff" fill-opacity=".92" letter-spacing="0.200">PDF</text></svg>
<div class="abs t" style="left:56px;top:106px;font-size:13px;line-height:16px;color:#0b5c6f;letter-spacing:.2px">Detailed</div>
<svg class="abs" style="left:567px;top:109px" width="12" height="12" viewBox="0 0 12 12"><path d="M1 1l10 10M11 1L1 11" fill="none" stroke="#444" stroke-width="1.250"/></svg>
<div class="abs" style="left:0;top:130px;width:607px;height:1px;background:#c9c9c9"></div>
<svg class="abs" style="left:25px;top:135px" width="22" height="24" viewBox="0 0 22 24"><path d="M2.500 0H14l7.500 7.500V22a2 2 0 0 1-2 2h-17a2 2 0 0 1-2-2V2a2 2 0 0 1 2-2z" fill="#2a7f46"/><path d="M14 0l7.500 7.500H15.500A1.500 1.500 0 0 1 14 6z" fill="#b9e6bd"/><text x="3.800" y="20.300" font-family="Liberation Sans, sans-serif" font-size="5.800" fill="#fff" fill-opacity=".92" letter-spacing="0.200">XLS</text></svg>
<div class="abs t" style="left:56px;top:139px;font-size:13px;line-height:16px;color:#0b5c6f;letter-spacing:.2px">Employees (editable) - End 31.01.2022</div>
<svg class="abs" style="left:567px;top:142px" width="12" height="12" viewBox="0 0 12 12"><path d="M1 1l10 10M11 1L1 11" fill="none" stroke="#444" stroke-width="1.250"/></svg>
<div class="abs" style="left:0;top:163px;width:607px;height:1px;background:#c9c9c9"></div>
<svg class="abs" style="left:25px;top:168px" width="22" height="24" viewBox="0 0 22 24"><path d="M2.500 0H14l7.500 7.500V22a2 2 0 0 1-2 2h-17a2 2 0 0 1-2-2V2a2 2 0 0 1 2-2z" fill="#8a0418"/><path d="M14 0l7.500 7.500H15.500A1.500 1.500 0 0 1 14 6z" fill="#fe9a8f"/><text x="3.800" y="20.300" font-family="Liberation Sans, sans-serif" font-size="5.800" fill="#fff" fill-opacity=".92" letter-spacing="0.200">PDF</text></svg>
<div class="abs t" style="left:56px;top:172px;font-size:13px;line-height:16px;color:#0b5c6f;letter-spacing:.2px">New Hire</div>
<svg class="abs" style="left:567px;top:175px" width="12" height="12" viewBox="0 0 12 12"><path d="M1 1l10 10M11 1L1 11" fill="none" stroke="#444" stroke-width="1.250"/></svg>
<div class="abs" style="left:0;top:196px;width:607px;height:1px;background:#c9c9c9"></div>
<svg class="abs" style="left:25px;top:201px" width="22" height="24" viewBox="0 0 22 24"><path d="M2.500 0H14l7.500 7.500V22a2 2 0 0 1-2 2h-17a2 2 0 0 1-2-2V2a2 2 0 0 1 2-2z" fill="#2a7f46"/><path d="M14 0l7.500 7.500H15.500A1.500 1.500 0 0 1 14 6z" fill="#b9e6bd"/><text x="3.800" y="20.300" font-family="Liberation Sans, sans-serif" font-size="5.800" fill="#fff" fill-opacity=".92" letter-spacing="0.200">XLS</text></svg>
<div class="abs t" style="left:56px;top:205px;font-size:13px;line-height:16px;color:#0b5c6f;letter-spacing:.2px">New Hire</div>
<svg class="abs" style="left:567px;top:208px" width="12" height="12" viewBox="0 0 12 12"><path d="M1 1l10 10M11 1L1 11" fill="none" stroke="#444" stroke-width="1.250"/></svg>
<div class="abs" style="left:0;top:229px;width:607px;height:1px;background:#c9c9c9"></div>
<svg class="abs" style="left:25px;top:234px" width="22" height="24" viewBox="0 0 22 24"><path d="M2.500 0H14l7.500 7.500V22a2 2 0 0 1-2 2h-17a2 2 0 0 1-2-2V2a2 2 0 0 1 2-2z" fill="#2a7f46"/><path d="M14 0l7.500 7.500H15.500A1.500 1.500 0 0 1 14 6z" fill="#b9e6bd"/><text x="3.800" y="20.300" font-family="Liberation Sans, sans-serif" font-size="5.800" fill="#fff" fill-opacity=".92" letter-spacing="0.200">XLS</text></svg>
<div class="abs t" style="left:56px;top:238px;font-size:13px;line-height:16px;color:#0b5c6f;letter-spacing:.2px">New Hire</div>
<svg class="abs" style="left:567px;top:241px" width="12" height="12" viewBox="0 0 12 12"><path d="M1 1l10 10M11 1L1 11" fill="none" stroke="#444" stroke-width="1.250"/></svg>
<div class="abs" style="left:0;top:262px;width:607px;height:1px;background:#c9c9c9"></div>
<svg class="abs" style="left:25px;top:267px" width="22" height="24" viewBox="0 0 22 24"><path d="M2.500 0H14l7.500 7.500V22a2 2 0 0 1-2 2h-17a2 2 0 0 1-2-2V2a2 2 0 0 1 2-2z" fill="#8a0418"/><path d="M14 0l7.500 7.500H15.500A1.500 1.500 0 0 1 14 6z" fill="#fe9a8f"/><text x="3.800" y="20.300" font-family="Liberation Sans, sans-serif" font-size="5.800" fill="#fff" fill-opacity=".92" letter-spacing="0.200">PDF</text></svg>
<div class="abs t" style="left:56px;top:271px;font-size:13px;line-height:16px;color:#0b5c6f;letter-spacing:.2px">New Hire</div>
<svg class="abs" style="left:567px;top:274px" width="12" height="12" viewBox="0 0 12 12"><path d="M1 1l10 10M11 1L1 11" fill="none" stroke="#444" stroke-width="1.250"/></svg>
<div class="abs" style="left:0;top:295px;width:607px;height:1px;background:#c9c9c9"></div>
<svg class="abs" style="left:25px;top:300px" width="22" height="24" viewBox="0 0 22 24"><path d="M2.500 0H14l7.500 7.500V22a2 2 0 0 1-2 2h-17a2 2 0 0 1-2-2V2a2 2 0 0 1 2-2z" fill="#8a0418"/><path d="M14 0l7.500 7.500H15.500A1.500 1.500 0 0 1 14 6z" fill="#fe9a8f"/><text x="3.800" y="20.300" font-family="Liberation Sans, sans-serif" font-size="5.800" fill="#fff" fill-opacity=".92" letter-spacing="0.200">PDF</text></svg>
<div class="abs t" style="left:56px;top:304px;font-size:13px;line-height:16px;color:#0b5c6f;letter-spacing:.2px">Overview</div>
<svg class="abs" style="left:567px;top:307px" width="12" height="12" viewBox="0 0 12 12"><path d="M1 1l10 10M11 1L1 11" fill="none" stroke="#444" stroke-width="1.250"/></svg>
<div class="abs" style="left:0;top:328px;width:607px;height:1px;background:#c9c9c9"></div>
<svg class="abs" style="left:25px;top:333px" width="22" height="24" viewBox="0 0 22 24"><path d="M2.500 0H14l7.500 7.500V22a2 2 0 0 1-2 2h-17a2 2 0 0 1-2-2V2a2 2 0 0 1 2-2z" fill="#8a0418"/><path d="M14 0l7.500 7.500H15.500A1.500 1.500 0 0 1 14 6z" fill="#fe9a8f"/><text x="3.800" y="20.300" font-family="Liberation Sans, sans-serif" font-size="5.800" fill="#fff" fill-opacity=".92" letter-spacing="0.200">PDF</text></svg>
<div class="abs t" style="left:56px;top:337px;font-size:13px;line-height:16px;color:#0b5c6f;letter-spacing:.2px">Overview</div>
<svg class="abs" style="left:567px;top:340px" width="12" height="12" viewBox="0 0 12 12"><path d="M1 1l10 10M11 1L1 11" fill="none" stroke="#444" stroke-width="1.250"/></svg>
<div class="abs" style="left:0;top:361px;width:607px;height:1px;background:#c9c9c9"></div>
<svg class="abs" style="left:25px;top:366px" width="22" height="24" viewBox="0 0 22 24"><path d="M2.500 0H14l7.500 7.500V22a2 2 0 0 1-2 2h-17a2 2 0 0 1-2-2V2a2 2 0 0 1 2-2z" fill="#2a7f46"/><path d="M14 0l7.500 7.500H15.500A1.500 1.500 0 0 1 14 6z" fill="#b9e6bd"/><text x="3.800" y="20.300" font-family="Liberation Sans, sans-serif" font-size="5.800" fill="#fff" fill-opacity=".92" letter-spacing="0.200">XLS</text></svg>
<div class="abs t" style="left:56px;top:370px;font-size:13px;line-height:16px;color:#0b5c6f;letter-spacing:.2px">Salary</div>
<svg class="abs" style="left:567px;top:373px" width="12" height="12" viewBox="0 0 12 12"><path d="M1 1l10 10M11 1L1 11" fill="none" stroke="#444" stroke-width="1.250"/></svg>
<div class="abs" style="left:0;top:394px;width:607px;height:1px;background:#c9c9c9"></div>
<svg class="abs" style="left:25px;top:399px" width="22" height="24" viewBox="0 0 22 24"><path d="M2.500 0H14l7.500 7.500V22a2 2 0 0 1-2 2h-17a2 2 0 0 1-2-2V2a2 2 0 0 1 2-2z" fill="#2a7f46"/><path d="M14 0l7.500 7.500H15.500A1.500 1.500 0 0 1 14 6z" fill="#b9e6bd"/><text x="3.800" y="20.300" font-family="Liberation Sans, sans-serif" font-size="5.800" fill="#fff" fill-opacity=".92" letter-spacing="0.200">XLS</text></svg>
<div class="abs t" style="left:56px;top:403px;font-size:13px;line-height:16px;color:#0b5c6f;letter-spacing:.2px">Salary</div>
<svg class="abs" style="left:567px;top:406px" width="12" height="12" viewBox="0 0 12 12"><path d="M1 1l10 10M11 1L1 11" fill="none" stroke="#444" stroke-width="1.250"/></svg>
<div class="abs" style="left:0;top:427px;width:607px;height:1px;background:#c9c9c9"></div>
<svg class="abs" style="left:25px;top:432px" width="22" height="24" viewBox="0 0 22 24"><path d="M2.500 0H14l7.500 7.500V22a2 2 0 0 1-2 2h-17a2 2 0 0 1-2-2V2a2 2 0 0 1 2-2z" fill="#2a7f46"/><path d="M14 0l7.500 7.500H15.500A1.500 1.500 0 0 1 14 6z" fill="#b9e6bd"/><text x="3.800" y="20.300" font-family="Liberation Sans, sans-serif" font-size="5.800" fill="#fff" fill-opacity=".92" letter-spacing="0.200">XLS</text></svg>
<div class="abs t" style="left:56px;top:436px;font-size:13px;line-height:16px;color:#0b5c6f;letter-spacing:.2px">Salary</div>
<svg class="abs" style="left:567px;top:439px" width="12" height="12" viewBox="0 0 12 12"><path d="M1 1l10 10M11 1L1 11" fill="none" stroke="#444" stroke-width="1.250"/></svg>
</div>
</body>
</html>
